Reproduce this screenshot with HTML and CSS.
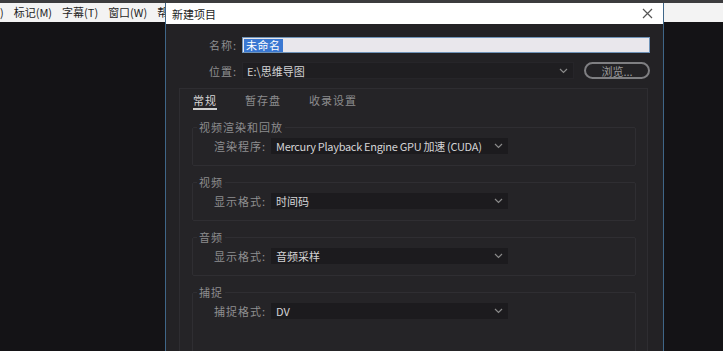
FILE: index.html
```html
<!DOCTYPE html>
<html lang="zh-CN">
<head>
<meta charset="utf-8">
<title>新建项目</title>
<link rel="stylesheet" href="styles.css">
</head>
<body>
<div class="app">
  <div class="topstrip"></div>
  <div class="menubar">
    <span class="menu-item">)</span>
    <span class="menu-item">标记(M)</span>
    <span class="menu-item">字幕(T)</span>
    <span class="menu-item">窗口(W)</span>
    <span class="menu-item">帮</span>
  </div>
  <div class="workspace"></div>

  <div class="dialog">
    <div class="titlebar">
      <span class="title">新建项目</span>
      <svg class="close" width="11" height="11" viewBox="0 0 11 11"><path d="M1 1 L10 10 M10 1 L1 10" stroke="#555" stroke-width="1.2" fill="none"/></svg>
    </div>
    <div class="dialog-body">
      <div class="form-row">
        <label class="form-label">名称:</label>
        <div class="text-input"><span class="selected">未命名</span></div>
      </div>
      <div class="form-row">
        <label class="form-label">位置:</label>
        <div class="path-row">
          <div class="select path-select">
            <span>E:\思维导图</span>
            <svg class="chev" width="9" height="6" viewBox="0 0 9 6"><path d="M1 1 L4.5 4.5 L8 1" stroke="#8a8a8a" stroke-width="1.2" fill="none"/></svg>
          </div>
          <button class="browse">浏览...</button>
        </div>
      </div>

      <div class="panel">
        <div class="tabs">
          <span class="tab active">常规</span>
          <span class="tab">暂存盘</span>
          <span class="tab">收录设置</span>
        </div>

        <fieldset class="group">
          <legend>视频渲染和回放</legend>
          <div class="group-row">
            <span class="group-label">渲染程序:</span>
            <div class="select">
              <span class="tight">Mercury Playback Engine GPU 加速 (CUDA)</span>
              <svg class="chev" width="9" height="6" viewBox="0 0 9 6"><path d="M1 1 L4.5 4.5 L8 1" stroke="#8a8a8a" stroke-width="1.2" fill="none"/></svg>
            </div>
          </div>
        </fieldset>

        <fieldset class="group">
          <legend>视频</legend>
          <div class="group-row">
            <span class="group-label">显示格式:</span>
            <div class="select">
              <span>时间码</span>
              <svg class="chev" width="9" height="6" viewBox="0 0 9 6"><path d="M1 1 L4.5 4.5 L8 1" stroke="#8a8a8a" stroke-width="1.2" fill="none"/></svg>
            </div>
          </div>
        </fieldset>

        <fieldset class="group">
          <legend>音频</legend>
          <div class="group-row">
            <span class="group-label">显示格式:</span>
            <div class="select">
              <span>音频采样</span>
              <svg class="chev" width="9" height="6" viewBox="0 0 9 6"><path d="M1 1 L4.5 4.5 L8 1" stroke="#8a8a8a" stroke-width="1.2" fill="none"/></svg>
            </div>
          </div>
        </fieldset>

        <fieldset class="group last">
          <legend>捕捉</legend>
          <div class="group-row">
            <span class="group-label">捕捉格式:</span>
            <div class="select">
              <span>DV</span>
              <svg class="chev" width="9" height="6" viewBox="0 0 9 6"><path d="M1 1 L4.5 4.5 L8 1" stroke="#8a8a8a" stroke-width="1.2" fill="none"/></svg>
            </div>
          </div>
        </fieldset>
      </div>
    </div>
  </div>
</div>
</body>
</html>
```

FILE: styles.css
```css
* { box-sizing: border-box; }

html, body {
  margin: 0;
  padding: 0;
  height: 100%;
  overflow: hidden;
  background: #141316;
  font-family: "Noto Sans CJK SC", "Noto Sans", sans-serif;
  font-size: 11px;
}

.app {
  position: relative;
  height: 351px;
  display: flex;
  flex-direction: column;
  overflow: hidden;
}

.topstrip {
  height: 3px;
  background: #3c3c3e;
}

.menubar {
  height: 19px;
  background: #f3f3f3;
  display: flex;
  align-items: center;
  gap: 10px;
  color: #1e1e1e;
  font-size: 11px;
  line-height: 19px;
}

.workspace {
  flex: 1;
  background: #141316;
}

/* dialog window floating over the app */
.dialog {
  position: absolute;
  left: 165px;
  top: 3px;
  width: 499px;
  height: 400px;
  display: flex;
  flex-direction: column;
  border-left: 1px solid #3f6688;
  border-right: 1px solid #3f6688;
}

.titlebar {
  height: 21px;
  background: #ffffff;
  display: flex;
  align-items: center;
  justify-content: space-between;
  padding: 0 10px 0 6px;
  color: #1c1c1c;
  font-size: 11px;
}

.close { display: block; }

.dialog-body {
  flex: 1;
  background: #232225;
  padding: 13px 13px 0 13px;
  display: flex;
  flex-direction: column;
}

.form-row {
  display: grid;
  grid-template-columns: 58px 1fr;
  column-gap: 5px;
  align-items: center;
  margin-bottom: 9px;
}

.form-label {
  text-align: right;
  color: #8e8e90;
  letter-spacing: 1px;
  line-height: 14px;
}

.text-input {
  height: 16px;
  background: #e9e7ec;
  border: 1px solid #6f93b8;
  display: flex;
  align-items: center;
  padding-left: 1px;
}

.selected {
  background: #3a78d2;
  color: #ffffff;
  line-height: 13px;
  padding: 0 2px;
  letter-spacing: 0.5px;
}

.path-row {
  display: flex;
  align-items: center;
  gap: 10px;
}

.select {
  height: 16px;
  background: #1c1b1e;
  color: #d4d4d6;
  display: flex;
  align-items: center;
  justify-content: space-between;
  padding: 0 5px 0 5px;
  line-height: 14px;
  width: 237px;
  white-space: nowrap;
}

.tight { letter-spacing: -0.3px; }

.path-select {
  flex: 1;
  width: auto;
  height: 17px;
  background: #1f1e21;
  border: 1px solid #262529;
  padding-left: 4px;
}

.browse {
  width: 66px;
  height: 17px;
  border: 2px solid #7f7f82;
  border-radius: 9px;
  background: #232225;
  color: #9a9a9c;
  font-family: inherit;
  font-size: 11px;
  line-height: 12px;
  padding: 0;
}

.panel {
  flex: 1;
  margin-right: 2px;
  background: #252427;
  border: 1px solid #2e2d31;
  padding: 4px 11px 0 12px;
}

.tabs {
  display: flex;
  gap: 28px;
  padding-left: 1px;
  margin-bottom: 10px;
}

.tab {
  color: #8c8c8e;
  line-height: 14px;
  letter-spacing: 1px;
  padding-bottom: 1px;
  border-bottom: 2px solid transparent;
}

.tab.active {
  color: #d6d6d6;
  border-bottom-color: #cfcfcf;
}

.group {
  margin: 0 0 9px 0;
  padding: 4px 0 11px 0;
  border: 1px solid #2f2e32;
  border-radius: 2px;
}

.group.last { padding-bottom: 60px; }

.group legend {
  color: #8c8c8e;
  line-height: 14px;
  padding: 0 2px;
  margin-left: 4px;
  letter-spacing: 1px;
}

.group-row {
  display: grid;
  grid-template-columns: 73px auto;
  column-gap: 5px;
  align-items: center;
  justify-content: start;
}

.group-label {
  text-align: right;
  color: #8e8e90;
  letter-spacing: 1px;
  line-height: 14px;
}

.chev { flex-shrink: 0; }
```
